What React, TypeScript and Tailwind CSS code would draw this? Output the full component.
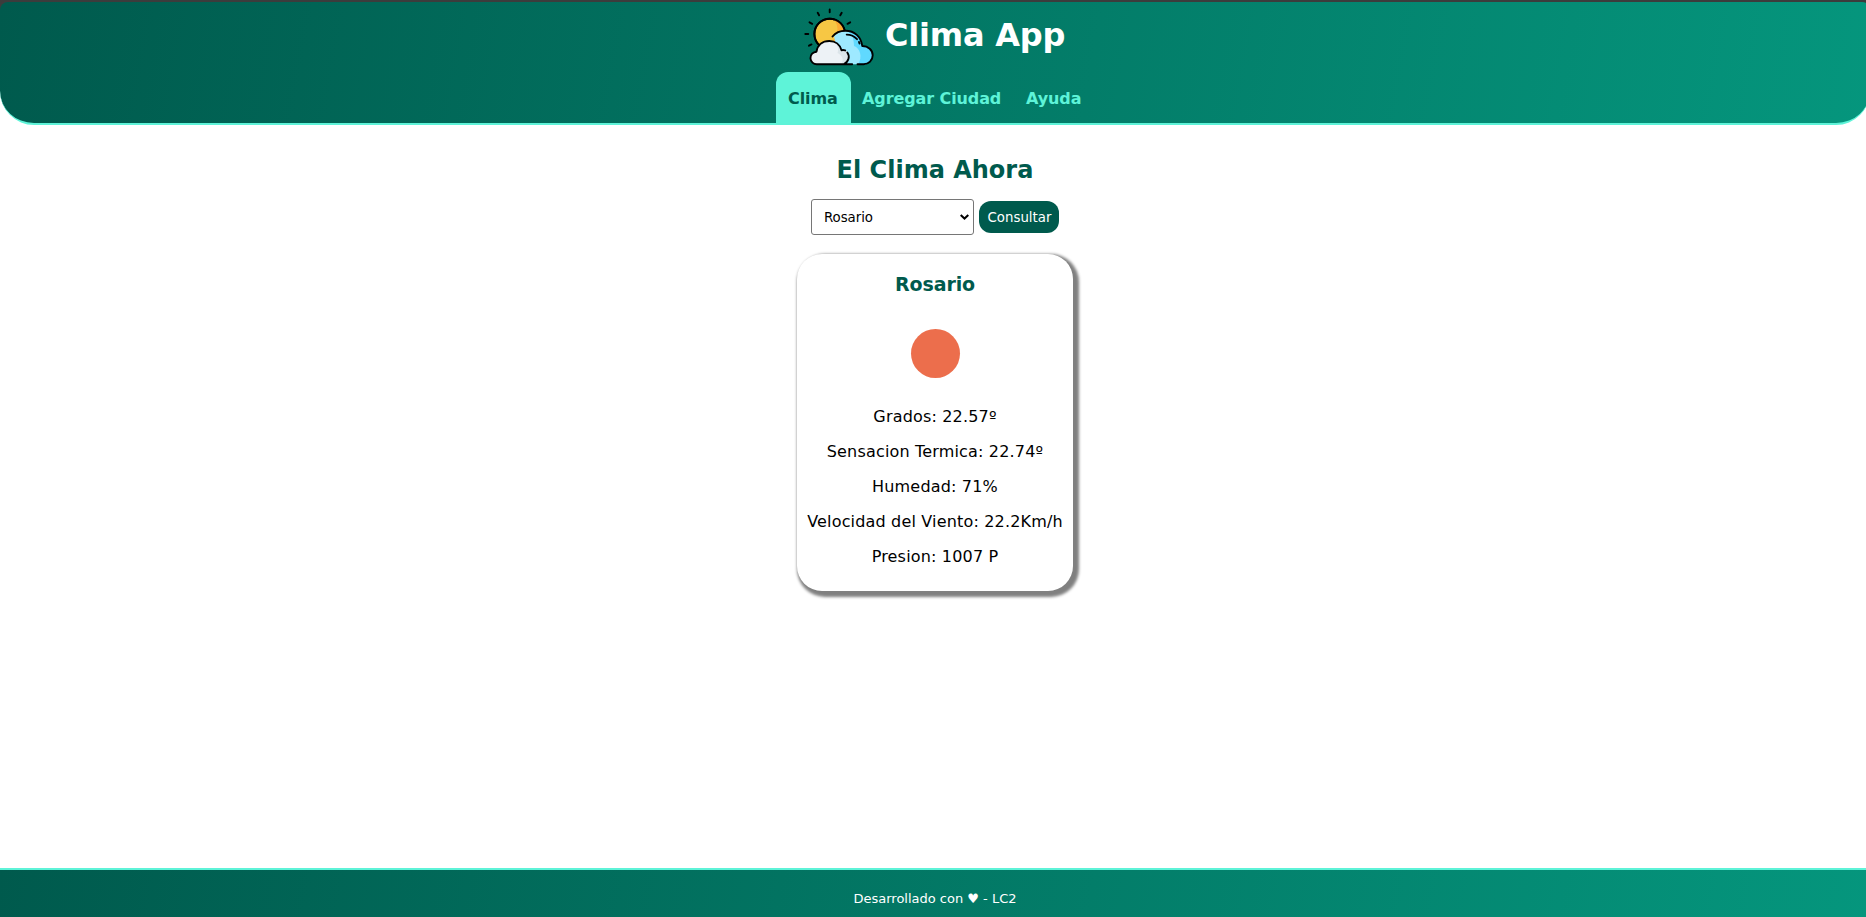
import React from "react";

function Logo() {
  return (
    <svg width="72" height="61" viewBox="0 0 72 61" fill="none" stroke="#000" strokeWidth="1.9" strokeLinecap="round" strokeLinejoin="round">
      <path d="M27.700 3.500v2.800M15.700 6.800l1.400 2.500M39.700 6.800l-1.400 2.500M7.500 16.300l2.700 1.500M48.200 16.300l-2.700 1.500M3.300 28h3M7 39.700l2.500-1.300" />
      <circle cx="27.700" cy="28" r="15.300" fill="#f7c744" />
      <path d="M31.500 13.300c7 8 5 17-7 29.500 12 0 18.400-7 18.400-14.800 0-7-4.700-13-11.400-14.700z" fill="#fbab34" stroke="none" />
      <circle cx="27.700" cy="28" r="15.300" />
      <path d="M32 30.500c3-3.800 7-5.800 11.500-5.800 9 0 15.500 6 16.800 15.300 6 0 10.400 4.200 10.400 9.200 0 5-4 9.100-9 9.100H38z" fill="#9ee9ff" stroke="none" />
      <path d="M44 24.700c6 3 8 8 8 15.300 6 2 9 11 4 18.300h5.700c5 0 9-4.100 9-9.100s-4.400-9.200-10.400-9.200C59 30.700 53 24.700 44 24.700z" fill="#60d9fe" stroke="none" />
      <path d="M30.500 30.500c3-3.800 8-5.800 13-5.800 9 0 15.500 6 16.800 15.300 6 0 10.400 4.200 10.400 9.200 0 5-4 9.100-9 9.100H55.500M44.700 28.600c4 0 7.500 1.500 10.300 4.600M57 36l.5 1.500" />
      <path d="M50.200 58.300H15a6.300 6.300 0 0 1-.5-12.600C15.500 39 20.500 35 27.300 35c6 0 10.700 3.600 12.200 9.200h3.500c3 1 4.500 5 3.500 8.600-.8 2.700-2.700 4.600-4.800 5.500z" fill="#edf2f6" stroke="none" />
      <path d="M31 35.500c5 3.500 6 7 4.500 11.500 5 2.500 6.500 6.500 4 11.300h2.200c2.500-1 4.200-3 4.800-5.500 1-4-1-8-5-8.600h-2c-1.200-4.500-4.500-8-8.500-8.700z" fill="#dce5ea" stroke="none" />
      <path d="M50.200 58.300H15a6.300 6.300 0 0 1-.5-12.600C15.500 39 20.500 35 27.300 35c6 0 10.700 3.600 12.200 9.200 1.500-.3 2.500-.2 3.700.2M45.300 46.500c1.400 1.900 1.800 4.100 1.200 6.300-.8 2.700-2.700 4.600-4.800 5.500" />
    </svg>
  );
}

const readings = [
  "Grados: 22.57º",
  "Sensacion Termica: 22.74º",
  "Humedad: 71%",
  "Velocidad del Viento: 22.2Km/h",
  "Presion: 1007 P",
];

export default function App() {
  return (
    <div className="h-[917px] w-full overflow-hidden bg-white font-['DejaVu_Sans',Verdana,sans-serif] text-black">
      <div className="flex h-full w-[1870px] flex-col">
        <div className="h-[125px] shrink-0 bg-[linear-gradient(#3c3c3c_0_16px,white_16px)] pt-[2px]">
          <header className="flex h-[123px] flex-col items-center rounded-t-[8px] rounded-b-[34px] border-b-2 border-[#5ef3d8] bg-[linear-gradient(100deg,#005a4d,#05967d)]">
            <div className="flex h-[70px] w-[266px] pt-[4px]">
              <Logo />
              <h1 className="pt-[10px] pl-[11px] text-[32px] leading-[38px] font-bold tracking-[-0.2px] whitespace-nowrap text-white">Clima App</h1>
            </div>
            <nav className="flex h-[51px] w-[318px] text-[16px] leading-[53px] font-bold tracking-[-0.1px] whitespace-nowrap text-[#5ef3d8]">
              <a className="w-[75px] shrink-0 rounded-t-[12px] bg-[#5ef3d8] pl-[12px] text-[#005a4d]">Clima</a>
              <a className="w-[162px] shrink-0 pl-[11px]">Agregar Ciudad</a>
              <a className="pl-[13px]">Ayuda</a>
            </nav>
          </header>
        </div>
        <main className="flex grow flex-col items-center">
          <h2 className="mt-[30px] text-[24px] leading-[30px] font-bold text-[#005a4d]">El Clima Ahora</h2>
          <div className="mt-[14px] flex h-[36px] w-[248px] items-center gap-[5px] text-[13.333px]">
            <div className="flex h-[36px] w-[163px] items-center justify-between rounded-[3px] border border-[#767676] pr-[4px] pl-[12px]">
              <span className="pt-[2px] tracking-[-0.05px]">Rosario</span>
              <svg width="9" height="6" viewBox="0 0 9 6" fill="none" stroke="#000" strokeWidth="2"><path d="M.7 1l3.800 3.600L8.300 1" /></svg>
            </div>
            <button className="h-[32px] w-[80px] rounded-[12px] bg-[#005a4d] pt-[2px] pl-px whitespace-nowrap text-white">Consultar</button>
          </div>
          <section className="mt-[19px] flex h-[337px] w-[276px] flex-col items-center rounded-[25px] bg-white shadow-[3px_3px_3px_3px_gray]">
            <h3 className="mt-[17px] text-[19px] leading-[26px] font-bold tracking-[-0.1px] text-[#005a4d]">Rosario</h3>
            <div className="mt-[32px] mb-[21px] size-[49px] rounded-full bg-[#ec6e4c]" />
            {readings.map((text) => (
              <p key={text} className="h-[35px] text-center text-[16px] leading-[35px] tracking-[0.17px] whitespace-nowrap">{text}</p>
            ))}
          </section>
        </main>
        <footer className="h-[49px] shrink-0 border-t-2 border-[#5ef3d8] bg-[linear-gradient(100deg,#005a4d,#05967d)] pt-[19px] text-center text-[13px] leading-[20px] text-white">
          Desarrollado con ♥ - LC2
        </footer>
      </div>
    </div>
  );
}
